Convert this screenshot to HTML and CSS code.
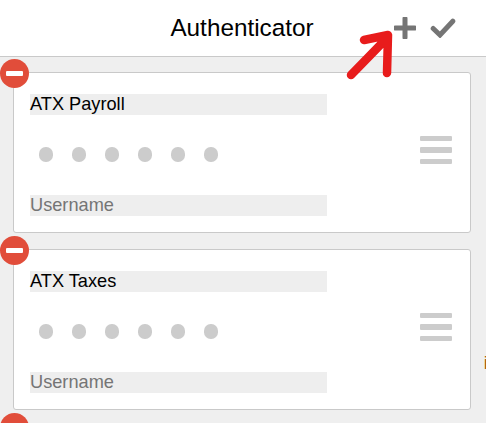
FILE: index.html
```html
<!DOCTYPE html>
<html lang="en">
<head>
<meta charset="utf-8">
<title>Authenticator</title>
<link rel="stylesheet" href="styles.css">
</head>
<body>
<div class="app">
  <header class="header">
    <h1 class="title">Authenticator</h1>
    <div class="actions">
      <svg class="icon" width="22" height="22" viewBox="0 0 22 22"><path d="M11 1.500v19M1.500 11h19" stroke="#757575" stroke-width="5" stroke-linecap="round" fill="none"/></svg>
      <svg class="icon" width="26" height="20" viewBox="0 0 26 20"><path d="M3.200 10.500l6.800 6.500L22.800 3.200" stroke="#757575" stroke-width="5" stroke-linecap="round" fill="none"/></svg>
    </div>
  </header>
  <main class="list">
    <article class="card">
      <span class="remove"><span class="remove-bar"></span></span>
      <div class="card-body">
        <div class="field issuer">ATX Payroll</div>
        <div class="code"><i></i><i></i><i></i><i></i><i></i><i></i></div>
        <div class="field account">Username</div>
      </div>
      <div class="handle"><b></b><b></b><b></b></div>
    </article>
    <article class="card">
      <span class="remove"><span class="remove-bar"></span></span>
      <div class="card-body">
        <div class="field issuer">ATX Taxes</div>
        <div class="code"><i></i><i></i><i></i><i></i><i></i><i></i></div>
        <div class="field account">Username</div>
      </div>
      <div class="handle"><b></b><b></b><b></b></div>
    </article>
    <article class="card">
      <span class="remove"><span class="remove-bar"></span></span>
    </article>
  </main>
  <span class="stray">i</span>
  <svg class="arrow" width="486" height="423" viewBox="0 0 486 423"><path d="M351 75L388 37M364 40L388 35L387 73" stroke="#e81c1c" stroke-width="8.500" stroke-linecap="round" stroke-linejoin="round" fill="none"/></svg>
</div>
</body>
</html>
```
FILE: styles.css
```css
html, body {
  margin: 0;
  padding: 0;
  height: 100%;
  overflow: hidden;
}
body {
  font-family: "Liberation Sans", Arial, sans-serif;
  background: #efefef;
}
.app {
  position: relative;
  width: 486px;
  height: 423px;
  overflow: hidden;
}
.header {
  height: 56px;
  background: #fff;
  border-bottom: 1px solid #c9c9c9;
  display: flex;
  align-items: center;
  justify-content: center;
  position: relative;
}
.title {
  margin: 0 2px 0 0;
  font-size: 24.3px;
  font-weight: 400;
  color: #000;
}
.actions {
  position: absolute;
  left: 394px;
  top: 17px;
  display: flex;
  gap: 14px;
  align-items: flex-start;
}
.actions .icon + .icon {
  margin-top: 1px;
}
.list {
  padding: 15px 15px 0 13px;
  display: flex;
  flex-direction: column;
  gap: 16px;
}
.card {
  position: relative;
  flex: none;
  height: 159px;
  background: #fff;
  border: 1px solid #c9c9c9;
  border-radius: 3px;
  display: flex;
  justify-content: space-between;
  align-items: center;
}
.remove {
  position: absolute;
  left: -14px;
  top: -14px;
  width: 29px;
  height: 29px;
  border-radius: 50%;
  background: #e14d3a;
  display: flex;
  align-items: center;
  justify-content: center;
}
.remove-bar {
  width: 17px;
  height: 5px;
  background: #fff;
  border-radius: 1px;
}
.card-body {
  align-self: flex-start;
  padding: 21px 0 0 16px;
  width: 297px;
  display: flex;
  flex-direction: column;
}
.field {
  height: 21px;
  line-height: 21px;
  background: #eee;
  font-size: 18.2px;
}
.issuer { color: #000; }
.account { color: #757575; margin-top: 30px; }
.code {
  margin-top: 29px;
  height: 21px;
  padding-left: 9.300px;
  display: flex;
  gap: 19.600px;
  align-items: center;
}
.code i {
  width: 13.400px;
  height: 14.500px;
  border-radius: 6.700px;
  background: #ccc;
}
.handle {
  margin: 0 18px 5px 0;
  display: flex;
  flex-direction: column;
  gap: 6px;
}
.handle b {
  width: 32px;
  height: 5.500px;
  background: #ccc;
  border-radius: 1px;
}
.stray {
  position: absolute;
  left: 483.800px;
  top: 353px;
  font-size: 18px;
  line-height: 20px;
  color: #a8620f;
}
.arrow {
  position: absolute;
  left: 0;
  top: 0;
  pointer-events: none;
}
```
